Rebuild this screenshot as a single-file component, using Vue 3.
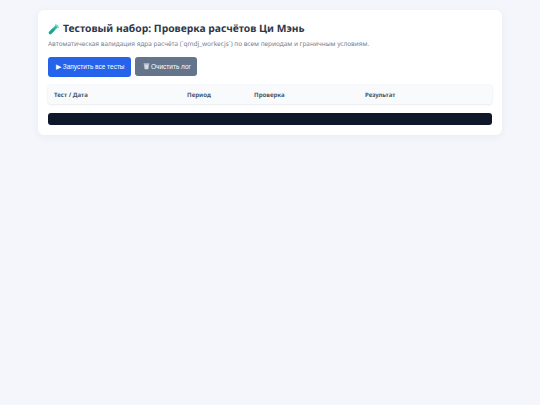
<script setup>
const columns = [
  { label: 'Тест / Дата', width: '133px' },
  { label: 'Период', width: '67px' },
  { label: 'Проверка', width: '111px' },
  { label: 'Результат', width: 'auto' },
]
</script>

<template>
  <div class="page">
    <div class="card">
      <h1 class="title">
        <svg class="tube" viewBox="0 0 14 14" aria-hidden="true">
          <path d="M2.6 11.4 L10.2 3.8" stroke="#2fb8a6" stroke-width="3.4" stroke-linecap="round" fill="none" />
          <path d="M2.6 11.4 L6.2 7.8" stroke="#1fa58c" stroke-width="3.4" stroke-linecap="round" fill="none" />
          <path d="M9 2 L12.4 5.4" stroke="#7fdcd0" stroke-width="1.6" stroke-linecap="round" fill="none" />
        </svg>
        Тестовый набор: Проверка расчётов Ци Мэнь
      </h1>
      <p class="subtitle">Автоматическая валидация ядра расчёта (`qmdj_worker.js`) по всем периодам и граничным условиям.</p>
      <div class="actions">
        <button class="btn btn-run">▶ Запустить все тесты</button>
        <button class="btn btn-clear">
          <svg class="bin" viewBox="0 0 10 10" aria-hidden="true">
            <path d="M1.5 2.2 H8.5 L7.6 9 H2.4 Z" fill="#d5dbe4" />
            <path d="M1 1.4 H9" stroke="#eef1f5" stroke-width="1.2" />
          </svg>
          Очистить лог
        </button>
      </div>
      <table class="results">
        <thead>
          <tr>
            <th v-for="col in columns" :key="col.label" :style="{ width: col.width }">{{ col.label }}</th>
          </tr>
        </thead>
      </table>
      <div class="log"></div>
    </div>
  </div>
</template>

<style>
html, body {
  background: #f4f6fb;
}
</style>

<style scoped>
.page {
  min-height: 405px;
  box-sizing: border-box;
  padding: 10px 38px;
  font-family: "Noto Sans", "Open Sans", sans-serif;
  text-rendering: geometricPrecision;
}
.card {
  background: #fff;
  border-radius: 6px;
  padding: 10px;
  box-shadow: 0 2px 8px rgba(30, 41, 59, 0.05);
}
.title {
  display: flex;
  align-items: center;
  gap: 3px;
  margin: 0;
  height: 17px;
  padding-top: 1px;
  box-sizing: border-box;
  font-size: 10.3px;
  font-weight: 700;
  color: #2d3748;
}
.tube {
  width: 12px;
  height: 12px;
  flex: none;
}
.subtitle {
  margin: 1px 0 0;
  font-size: 6.46px;
  line-height: 11px;
  color: #718096;
}
.actions {
  display: flex;
  gap: 4px;
  margin-top: 8px;
  align-items: flex-start;
}
.btn {
  border: none;
  border-radius: 3px;
  color: #fff;
  font-family: "Liberation Sans", Arial, sans-serif;
  font-size: 6.5px;
  padding: 0 8px;
  white-space: nowrap;
}
.btn-run {
  width: 83px;
  height: 20px;
  background: #2563eb;
}
.btn-clear {
  width: 62px;
  height: 19px;
  background: #64748b;
  display: flex;
  align-items: center;
  gap: 1px;
  padding-bottom: 1px;
}
.bin {
  width: 7px;
  height: 7px;
  flex: none;
}
.results {
  width: 100%;
  margin-top: 8px;
  border-collapse: separate;
  border-spacing: 0;
  table-layout: fixed;
  background: #f8fafc;
  border-radius: 3px;
  box-shadow: 0 0 0 0.5px #edf2f7, 0 1px 2px rgba(30, 41, 59, 0.1);
}
.results th {
  box-sizing: border-box;
  height: 19px;
  padding: 0 6px;
  text-align: left;
  font-size: 6.1px;
  font-weight: 700;
  color: #4a5568;
}
.log {
  height: 12px;
  margin-top: 9px;
  background: #0f172a;
  border-radius: 3px;
}
</style>
